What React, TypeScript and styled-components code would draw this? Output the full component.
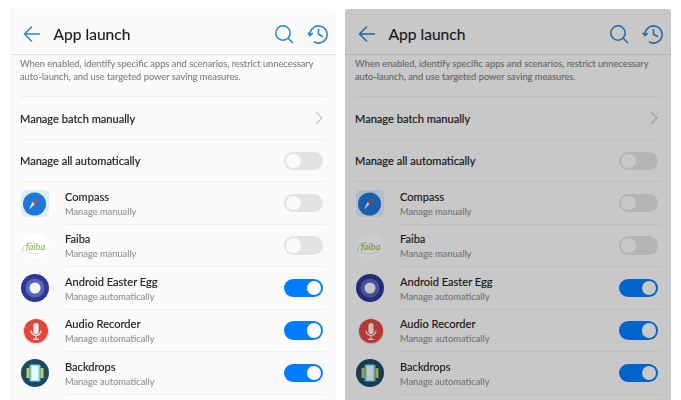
import React from 'react';
import styled, { createGlobalStyle } from 'styled-components';

const GlobalStyle = createGlobalStyle`
  html, body {
    margin: 0;
    height: 400px;
    overflow: hidden;
    background: #fff;
    font-family: Lato, "Noto Sans", sans-serif;
  }
`;

const StyledPage = styled.div`
  display: flex;
  gap: 9px;
  width: 681px;
  height: 400px;
  padding: 9px 9px 0 10px;
  box-sizing: border-box;
  overflow: hidden;
`;

const StyledPanel = styled.section<{ $dimmed?: boolean }>`
  position: relative;
  width: 326px;
  height: 391px;
  overflow: hidden;
  background: #fafafa;
  border-radius: 3px 3px 0 0;
  filter: blur(0.35px);
  &::after {
    content: '';
    display: ${(p) => (p.$dimmed ? 'block' : 'none')};
    position: absolute;
    inset: 0;
    background: rgba(0, 0, 0, 0.2);
  }
`;

const StyledHeader = styled.header`
  display: flex;
  align-items: center;
  height: 46px;
  padding: 4px 7.5px 0 12.5px;
  box-sizing: border-box;
  border-bottom: 1px solid #e2e2e2;
  svg {
    display: block;
    color: #2f82c8;
  }
`;

const StyledTitle = styled.h1`
  flex: 1;
  margin: 1px 0 0 13px;
  font-size: 15.6px;
  font-weight: 400;
  -webkit-text-stroke: 0.15px #1c1c1c;
  color: #1c1c1c;
`;

const StyledHeaderActions = styled.div`
  display: flex;
  align-items: center;
  gap: 13px;
`;

const StyledBody = styled.div`
  padding: 0 10px;
`;

const StyledDescription = styled.p`
  margin: 0;
  height: 42px;
  padding-top: 3px;
  box-sizing: border-box;
  border-bottom: 1px solid #eeeeee;
  font-size: 9.3px;
  line-height: 12.5px;
  -webkit-text-stroke: 0.1px #808080;
  color: #808080;
`;

const StyledRow = styled.div`
  display: flex;
  align-items: center;
  justify-content: space-between;
  height: 42.5px;
  padding: 1px 3px 0 0;
  box-sizing: border-box;
  border-bottom: 1px solid #eeeeee;
  font-size: 11.1px;
  -webkit-text-stroke: 0.2px #222;
  color: #222;
  svg {
    display: block;
    color: #c4c4c4;
  }
`;

const StyledAppRow = styled.div`
  display: flex;
  align-items: center;
  height: 42.5px;
`;

const StyledIconSlot = styled.div`
  flex: none;
  width: 30px;
  height: 30px;
  margin-right: 15px;
  svg {
    display: block;
  }
`;

const StyledAppInfo = styled.div`
  display: flex;
  flex: 1;
  align-items: center;
  justify-content: space-between;
  align-self: stretch;
  padding-right: 3px;
  border-bottom: 1px solid #eeeeee;
`;

const StyledAppText = styled.div`
  padding-top: 2px;
`;

const StyledName = styled.div`
  font-size: 11.1px;
  line-height: 15px;
  -webkit-text-stroke: 0.15px #222;
  color: #222;
`;

const StyledStatus = styled.div`
  margin-top: 1px;
  font-size: 9.3px;
  line-height: 14px;
  -webkit-text-stroke: 0.1px #929292;
  color: #929292;
`;

const StyledToggle = styled.span<{ $on?: boolean }>`
  display: flex;
  flex: none;
  justify-content: ${(p) => (p.$on ? 'flex-end' : 'flex-start')};
  width: 39px;
  height: 18.5px;
  padding: 2px;
  box-sizing: border-box;
  border-radius: 10px;
  background: ${(p) => (p.$on ? '#007dff' : '#e2e2e2')};
  &::before {
    content: '';
    width: 14.5px;
    height: 14.5px;
    border-radius: 50%;
    background: #fafafa;
  }
`;

const BackIcon = () => (
  <svg width="18" height="18" viewBox="0 0 18 18" fill="none" stroke="currentColor" strokeWidth="1.5">
    <path d="M17 9H1.5M9 1.5 1.5 9 9 16.5" />
  </svg>
);

const SearchIcon = () => (
  <svg width="20" height="20" viewBox="0 0 20 20" fill="none" stroke="currentColor" strokeWidth="1.5">
    <circle cx="9" cy="9" r="7.2" />
    <path d="M14 14l5 5" />
  </svg>
);

const HistoryIcon = () => (
  <svg width="22" height="22" viewBox="0 0 22 22" fill="none" stroke="currentColor" strokeWidth="1.6">
    <path d="M3 12.5A8.6 8.6 0 1 1 7 18.8" />
    <path d="M.8 9.8 3 12.6l2.8-2.4" />
    <path d="M11.5 6v5.2l4.5 2.6" />
  </svg>
);

const ChevronIcon = () => (
  <svg width="8" height="14" viewBox="0 0 8 14" fill="none" stroke="currentColor" strokeWidth="1.1">
    <path d="M1 1l6 6-6 6" />
  </svg>
);

const CompassIcon = () => (
  <svg width="30" height="30" viewBox="0 0 30 30">
    <rect x="1" y="2" width="28" height="27" rx="5" fill="#dcedfa" />
    <circle cx="14.5" cy="16" r="11.5" fill="#1e78d8" />
    <path d="M20 10.5l-7.5 3.5 2 2.2z" fill="#e0483e" />
    <path d="M9 21.5l3.5-7.5 2 2.2z" fill="#f4f8fc" />
  </svg>
);

const FaibaIcon = () => (
  <svg width="30" height="30" viewBox="0 0 30 30">
    <ellipse cx="15" cy="15" rx="14" ry="12" fill="#fff" />
    <path d="M3 21C1 14 9 11 12 12" fill="none" stroke="#a9cf7a" strokeWidth="0.8" />
    <path d="M6 21C13 24 22 23 27 17" fill="none" stroke="#cfe3b2" strokeWidth="0.7" />
    <text x="15.5" y="19" textAnchor="middle" fontSize="9.5" fontStyle="italic" fill="#86b44f" fontFamily="Lato, sans-serif">
      faiba
    </text>
  </svg>
);

const EasterEggIcon = () => (
  <svg width="30" height="30" viewBox="0 0 30 30">
    <circle cx="15" cy="15" r="14" fill="#2d3796" />
    <circle cx="15" cy="15" r="9.5" fill="#5b64bb" />
    <circle cx="15" cy="15" r="5.5" fill="#f6f7fb" />
  </svg>
);

const RecorderIcon = () => (
  <svg width="30" height="30" viewBox="0 0 30 30">
    <circle cx="16" cy="15.5" r="13" fill="#f2d9d6" />
    <circle cx="16" cy="15" r="12" fill="#e2483f" />
    <rect x="13.4" y="7" width="5.2" height="11" rx="2.6" fill="#fbeeee" />
    <path d="M11 14.5a5 5 0 0 0 10 0M16 19.5V23M13 23.3h6" fill="none" stroke="#fbeeee" strokeWidth="1.2" />
  </svg>
);

const BackdropsIcon = () => (
  <svg width="30" height="30" viewBox="0 0 30 30">
    <circle cx="15" cy="15" r="14" fill="#1d4a63" />
    <rect x="6.5" y="10" width="3" height="10" fill="#d5c64a" />
    <rect x="20.5" y="10" width="3" height="10" fill="#d5c64a" />
    <rect x="9.5" y="6.5" width="11" height="17" rx="1.5" fill="#62d3e8" />
    <rect x="11.5" y="7.5" width="7" height="15" fill="#eefbfd" />
  </svg>
);

const apps = [
  { name: 'Compass', status: 'Manage manually', on: false, icon: <CompassIcon /> },
  { name: 'Faiba', status: 'Manage manually', on: false, icon: <FaibaIcon /> },
  { name: 'Android Easter Egg', status: 'Manage automatically', on: true, icon: <EasterEggIcon /> },
  { name: 'Audio Recorder', status: 'Manage automatically', on: true, icon: <RecorderIcon /> },
  { name: 'Backdrops', status: 'Manage automatically', on: true, icon: <BackdropsIcon /> }
];

const AppLaunch = ({ dimmed }: { dimmed?: boolean }) => {
  return (
    <StyledPanel $dimmed={dimmed}>
      <StyledHeader>
        <BackIcon />
        <StyledTitle>App launch</StyledTitle>
        <StyledHeaderActions>
          <SearchIcon />
          <HistoryIcon />
        </StyledHeaderActions>
      </StyledHeader>
      <StyledBody>
        <StyledDescription>
          When enabled, identify specific apps and scenarios, restrict unnecessary auto-launch, and use targeted power
          saving measures.
        </StyledDescription>
        <StyledRow>
          Manage batch manually
          <ChevronIcon />
        </StyledRow>
        <StyledRow>
          Manage all automatically
          <StyledToggle />
        </StyledRow>
        {apps.map((app) => {
          return (
            <StyledAppRow key={app.name}>
              <StyledIconSlot>{app.icon}</StyledIconSlot>
              <StyledAppInfo>
                <StyledAppText>
                  <StyledName>{app.name}</StyledName>
                  <StyledStatus>{app.status}</StyledStatus>
                </StyledAppText>
                <StyledToggle $on={app.on} />
              </StyledAppInfo>
            </StyledAppRow>
          );
        })}
      </StyledBody>
    </StyledPanel>
  );
};

const App = () => {
  return (
    <StyledPage>
      <GlobalStyle />
      <AppLaunch />
      <AppLaunch dimmed />
    </StyledPage>
  );
};

export default App;
